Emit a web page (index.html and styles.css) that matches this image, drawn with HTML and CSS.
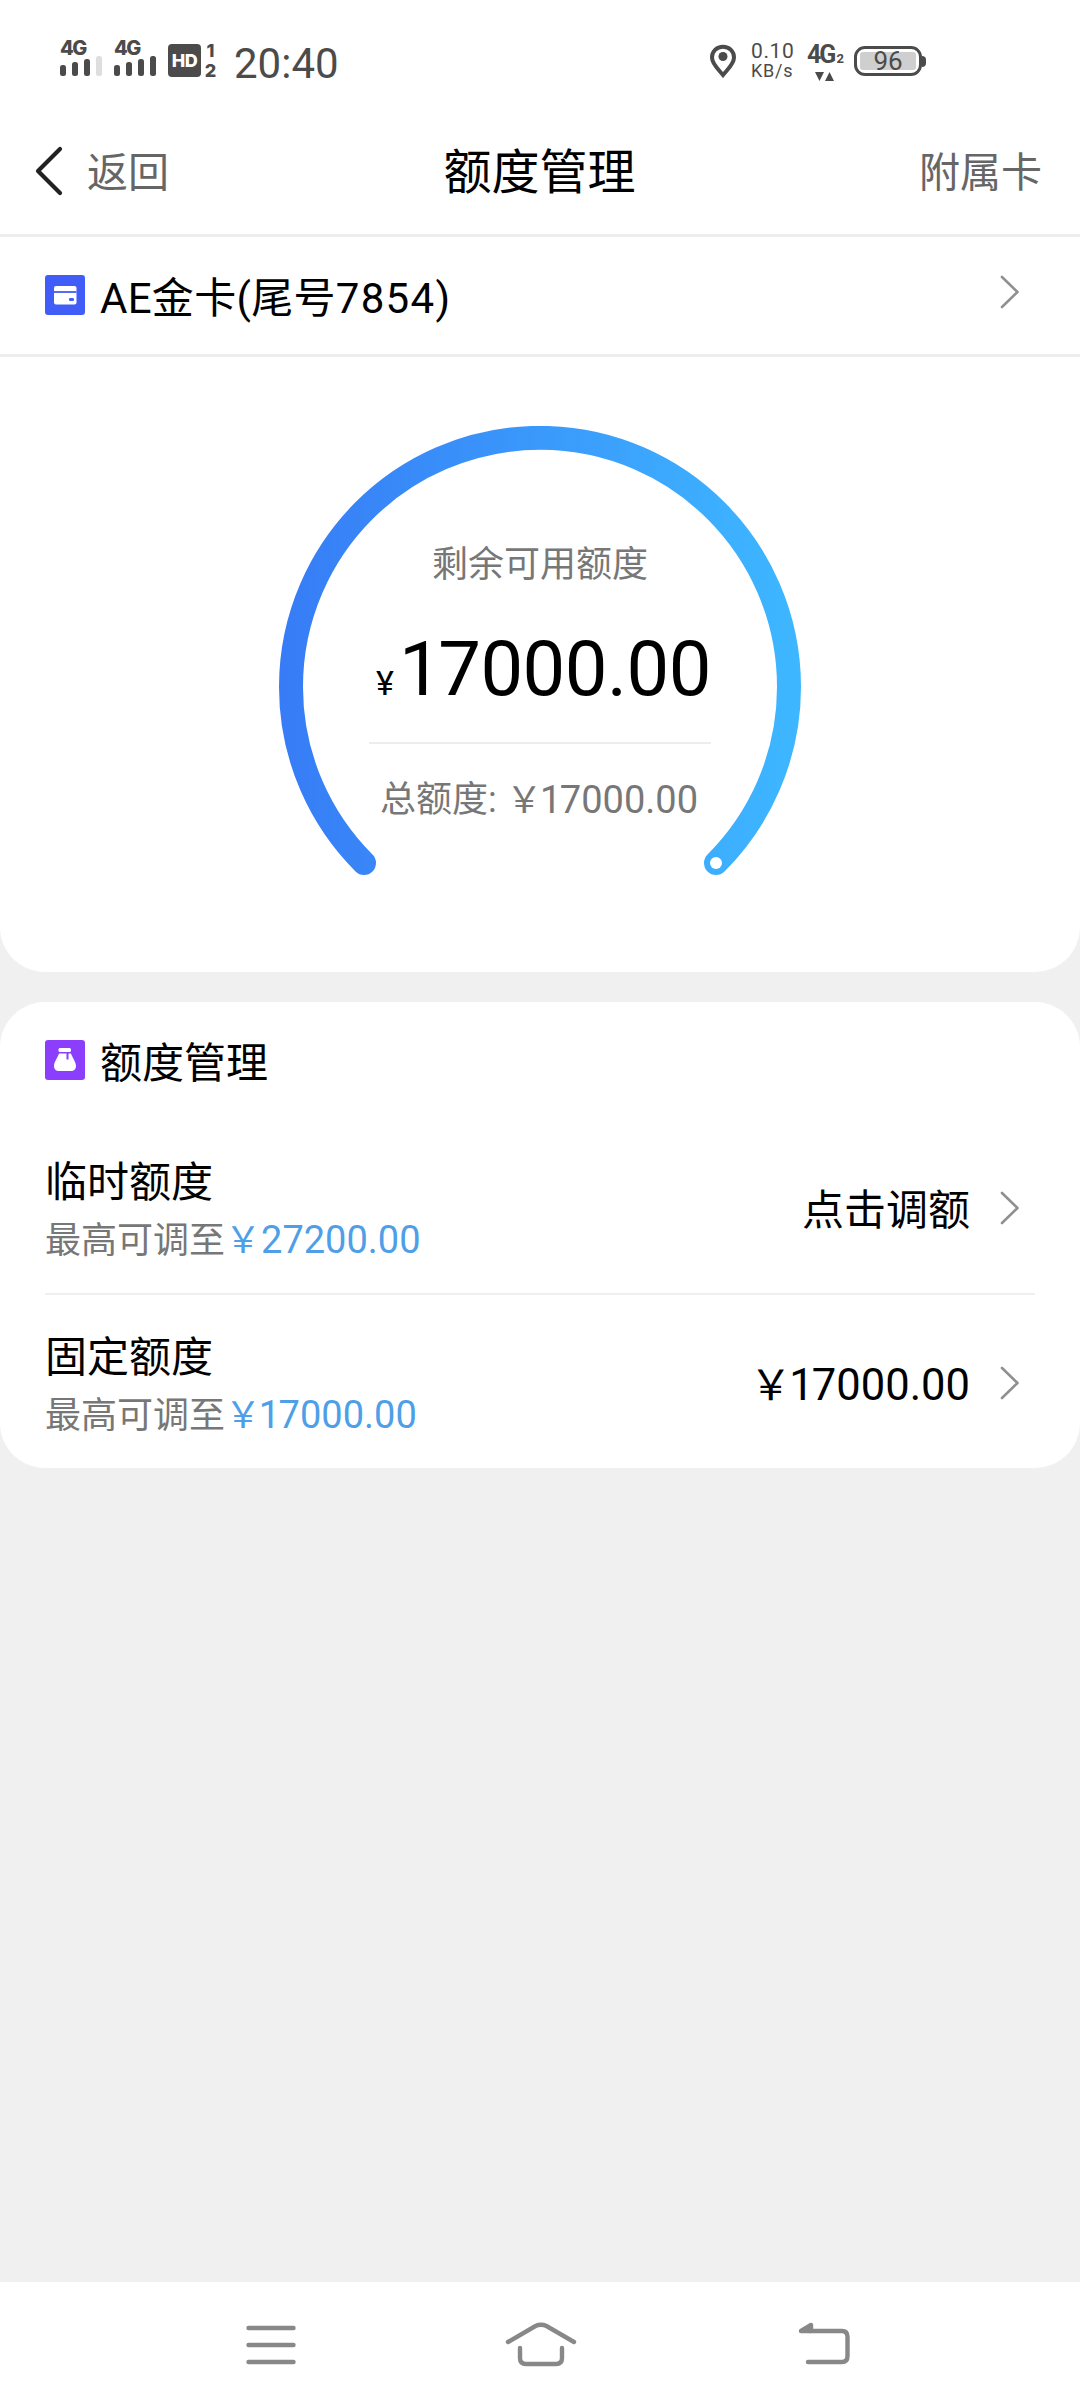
FILE: index.html
```html
<!DOCTYPE html>
<html lang="zh-CN">
<head>
<meta charset="utf-8">
<title>额度管理</title>
<link rel="stylesheet" href="styles.css">
</head>
<body>
<div class="screen">
  <div class="status">
    <div class="signal"><span>4G</span>
      <svg width="42" height="20" viewBox="0 0 42 20"><g fill="#4b4b4b"><rect y="9" width="6" height="11" rx="2.5"/><rect x="12" y="6" width="6" height="14" rx="2.5"/><rect x="24" y="3" width="6" height="17" rx="2.5"/></g><rect x="36" width="6" height="20" rx="2.5" fill="#dedede"/></svg>
    </div>
    <div class="signal second"><span>4G</span>
      <svg width="42" height="20" viewBox="0 0 42 20" fill="#4b4b4b"><rect y="9" width="6" height="11" rx="2.5"/><rect x="12" y="6" width="6" height="14" rx="2.5"/><rect x="24" y="3" width="6" height="17" rx="2.5"/><rect x="36" width="6" height="20" rx="2.5"/></svg>
    </div>
    <div class="hd">HD</div>
    <div class="sims"><span>1</span><span>2</span></div>
    <div class="clock">20:40</div>
    <svg class="pin" width="28" height="34" viewBox="0 0 28 34"><path d="M14 2.8C7.500 2.800 3 7.500 3 13.500C3 20 9.500 25.500 14 31C18.500 25.500 25 20 25 13.500C25 7.500 20.500 2.800 14 2.800Z" fill="none" stroke="#4b4b4b" stroke-width="4"/><circle cx="14" cy="12.500" r="4.500" fill="#4b4b4b"/></svg>
    <div class="speed"><span class="rate">0.10</span><span class="unit">KB/s</span></div>
    <div class="net"><div>4G<small>2</small></div><svg width="20" height="9" viewBox="0 0 20 9" fill="#4b4b4b"><path d="M0 0H9L4.500 9ZM10 9H19L14.500 0Z"/></svg></div>
    <div class="battery"><div class="level">96</div></div>
  </div>

  <header class="topbar">
    <div class="back"><svg width="28" height="50" viewBox="0 0 28 50"><path d="M25 3L3 25L25 47" fill="none" stroke="#222" stroke-width="4.200" stroke-linecap="round" stroke-linejoin="round"/></svg><span>返回</span></div>
    <h1>额度管理</h1>
    <span class="extra">附属卡</span>
  </header>

  <section class="card summary">
    <div class="account">
      <svg width="40" height="40" viewBox="0 0 40 40"><rect width="40" height="40" rx="3" fill="#405df8"/><rect x="9" y="11" width="22.500" height="18.500" rx="2" fill="#fff"/><path d="M9 17H31.500" stroke="#405df8" stroke-width="1.800"/><rect x="24" y="23" width="5" height="3" rx="1.300" fill="#405df8"/></svg>
      <span class="label">AE金卡(尾号<span class="tail">7854</span>)</span>
      <svg class="arrow" width="20" height="34" viewBox="0 0 20 34"><path d="M2 2L17.500 17L2 32"/></svg>
    </div>
    <div class="gauge">
      <svg class="ring" width="522" height="450" viewBox="0 0 522 450">
        <defs><linearGradient id="sweep" gradientUnits="userSpaceOnUse" x1="0" y1="0" x2="522" y2="0"><stop offset="0" stop-color="#377cf6"/><stop offset=".5" stop-color="#3a99fb"/><stop offset=".88" stop-color="#3db1ff"/><stop offset="1" stop-color="#3db7ff"/></linearGradient></defs>
        <path d="M85 437A249 249 0 1 1 437 437" fill="none" stroke="url(#sweep)" stroke-width="24" stroke-linecap="round"/>
        <circle cx="437" cy="437" r="6" fill="#fff"/>
      </svg>
      <div class="readout">
        <div class="caption">剩余可用额度</div>
        <div class="amount"><span class="yen">¥</span><span class="figure"><i>1</i>7000.00</span></div>
        <div class="total"><span>总额度:</span><span class="sum">￥<b><i>1</i>7000.00</b></span></div>
      </div>
    </div>
  </section>

  <section class="card limits">
    <h2><svg width="40" height="40" viewBox="0 0 40 40"><rect width="40" height="40" rx="3" fill="#8b3ffc"/><g fill="#fff"><rect x="13.500" y="8" width="12.500" height="4" rx="1.500"/><path d="M14 13.500H26C27 17 31 22 31 26C31 29 29 31 26 31H14C11 31 9 29 9 26C9 22 13 17 14 13.500Z"/></g><path d="M22.500 13V19.500" stroke="#8b3ffc" stroke-width="2"/></svg><span>额度管理</span></h2>
    <div class="row">
      <div class="info"><div class="name">临时额度</div><div class="max">最高可调至<em>￥<b>27200.00</b></em></div></div>
      <div class="value">点击调额</div>
      <svg class="arrow" width="20" height="34" viewBox="0 0 20 34"><path d="M2 2L17.500 17L2 32"/></svg>
    </div>
    <div class="row">
      <div class="info"><div class="name">固定额度</div><div class="max">最高可调至<em>￥<b><i>1</i>7000.00</b></em></div></div>
      <div class="value">￥<b><i>1</i>7000.00</b></div>
      <svg class="arrow" width="20" height="34" viewBox="0 0 20 34"><path d="M2 2L17.500 17L2 32"/></svg>
    </div>
  </section>

  <nav class="sysnav">
    <svg width="50" height="46" viewBox="0 0 50 46"><path d="M2.500 6H47.500M2.500 23H47.500M2.500 40H47.500"/></svg>
    <svg width="72" height="46" viewBox="0 0 72 46"><path d="M3 20L30.500 4Q36 1.500 41.500 4L69 20M15 26V36Q15 42 21 42H51Q57 42 57 36V26"/></svg>
    <svg width="52" height="46" viewBox="0 0 52 46"><path d="M12 9H44Q49.500 9 49.500 15V34Q49.500 40 44 40H10"/><path d="M3 9L13 3V9Z" fill="#888" stroke-width="2.500" stroke-linejoin="round"/></svg>
  </nav>
</div>
</body>
</html>
```
FILE: styles.css
```css
* { box-sizing: border-box; }
body {
  margin: 0;
  background: #f0f0f0;
  color: #000;
  font-family: Roboto, "Noto Sans CJK SC", sans-serif;
}
b, i, em { font-weight: inherit; font-style: normal; }
/* the figure 1 is set narrower than the other digits */
i { margin: 0 -0.04em 0 -0.06em; }
svg { display: block; flex: none; }
.screen { width: 1080px; height: 2408px; display: flex; flex-direction: column; }

/* status bar */
.status {
  height: 120px;
  padding: 41px 0 0 60px;
  background: #fff;
  color: #4b4b4b;
  display: flex;
  align-items: flex-start;
}
.signal { width: 42px; height: 36px; font: 800 20px/15px Inter, sans-serif; letter-spacing: -1.5px; }
.signal span { display: block; height: 15px; }
.second { margin-left: 12px; }
.hd {
  width: 33px; height: 33px; margin: 3px 0 0 12px;
  border-radius: 4px; background: #4b4b4b; color: #fff;
  font: 800 18px/33px Inter, sans-serif; text-align: center; letter-spacing: -0.5px;
}
.sims { width: 13px; margin: 3px 0 0 3px; display: flex; flex-direction: column; gap: 6px; align-items: center; font: 800 18px/14px Inter, sans-serif; }
.clock { width: 110px; margin: 4px 0 0 17px; font-size: 42px; line-height: 38px; }
.pin { margin: 3px 0 0 365px; }
.speed { width: 46px; margin-left: 14px; display: flex; flex-direction: column; }
.rate { font-size: 21px; line-height: 20px; letter-spacing: 0.6px; }
.unit { font-size: 18px; line-height: 20px; letter-spacing: 0.8px; }
.net { width: 38px; margin: 5px 0 0 10px; font: 700 25px/18px Roboto, sans-serif; letter-spacing: -2px; white-space: nowrap; }
.net small { font-size: 13px; letter-spacing: 0; margin-left: 2px; }
.net svg { margin: 4px 0 0 8px; }
.battery {
  width: 68px; height: 30px; margin: 5px 0 0 9px; padding: 3px;
  border: 3px solid #4b4b4b; border-radius: 11px; position: relative;
}
.battery::after {
  content: ""; position: absolute; right: -7px; top: 7px;
  width: 4px; height: 11px; border-radius: 0 4px 4px 0; background: #4b4b4b;
}
.level { height: 18px; background: #cfcfcf; border-radius: 3px; text-align: center; font-size: 26px; line-height: 19px; }

/* title bar */
.topbar {
  height: 117px;
  padding: 0 38px 13px 35px;
  background: #fff;
  border-bottom: 3px solid #ededed;
  display: grid;
  grid-template-columns: 1fr auto 1fr;
  align-items: center;
  color: #666;
  font-size: 41px;
  line-height: 60px;
}
.back { display: flex; align-items: center; gap: 24px; }
.back span, .extra { padding-top: 4px; }
.topbar h1 { margin: 0; padding: 4px 0 0 2px; font-size: 48px; font-weight: 400; color: #000; }
.extra { text-align: right; }

/* account and gauge */
.card { background: #fff; }
.summary { height: 735px; border-radius: 0 0 45px 45px; }
.account { height: 120px; padding: 0 60px 3px 45px; border-bottom: 3px solid #ededed; display: flex; align-items: center; }
.account > svg:first-child { margin-top: 2px; }
.label { margin-left: 15px; font-size: 42px; line-height: 60px; padding-top: 9px; letter-spacing: 0.3px; }
.tail { letter-spacing: 1.3px; }
.arrow { margin-left: auto; fill: none; stroke: #909090; stroke-width: 2.6; stroke-linecap: round; stroke-linejoin: round; }
.account .arrow { margin-bottom: 4px; }
.gauge { display: grid; justify-content: center; padding-top: 69px; }
.ring, .readout { grid-area: 1 / 1; }
.readout { width: 342px; justify-self: center; padding-top: 114px; text-align: center; }
.caption { font-size: 36px; line-height: 50px; color: #777; }
.amount { height: 154px; padding: 37px 0 0 7px; border-bottom: 2px solid #ededed; display: flex; align-items: baseline; justify-content: space-between; line-height: 84px; }
.yen { font-size: 34px; }
.figure { font-size: 76px; letter-spacing: -0.5px; }
.total { padding: 31px 13px 0 11px; display: flex; justify-content: space-between; font-size: 36px; line-height: 50px; color: #777; }
.total b, .max b { font-size: 38px; }

/* limits */
.limits { height: 466px; margin-top: 30px; border-radius: 45px; padding: 0 45px; }
.limits h2 { margin: 0; height: 116px; display: flex; align-items: center; font-size: 42px; font-weight: 400; line-height: 60px; }
.limits h2 span { margin-left: 15px; padding-top: 7px; }
.row { height: 175px; padding: 4px 15px 0 0; display: flex; align-items: center; }
.row + .row { padding-top: 2px; border-top: 2px solid #efefef; }
.info { padding-top: 7px; line-height: 55px; }
.name { font-size: 42px; line-height: 60px; }
.max { font-size: 36px; color: #777; }
.max em { color: #4e9fe8; }
.value { margin-left: auto; padding-top: 6px; font-size: 42px; line-height: 60px; }
.value b { font-size: 43.5px; }
.value + .arrow { margin-left: 30px; }

/* system navigation */
.sysnav {
  height: 126px; margin-top: auto; padding: 0 230px 0 246px;
  background: #fff; display: flex; align-items: center;
}
.sysnav svg + svg { margin-left: 209px; }
.sysnav svg:last-child { margin-left: auto; }
.sysnav path { fill: none; stroke: #888; stroke-width: 4.4; stroke-linecap: round; }
.sysnav path[fill] { fill: #888; }
```
